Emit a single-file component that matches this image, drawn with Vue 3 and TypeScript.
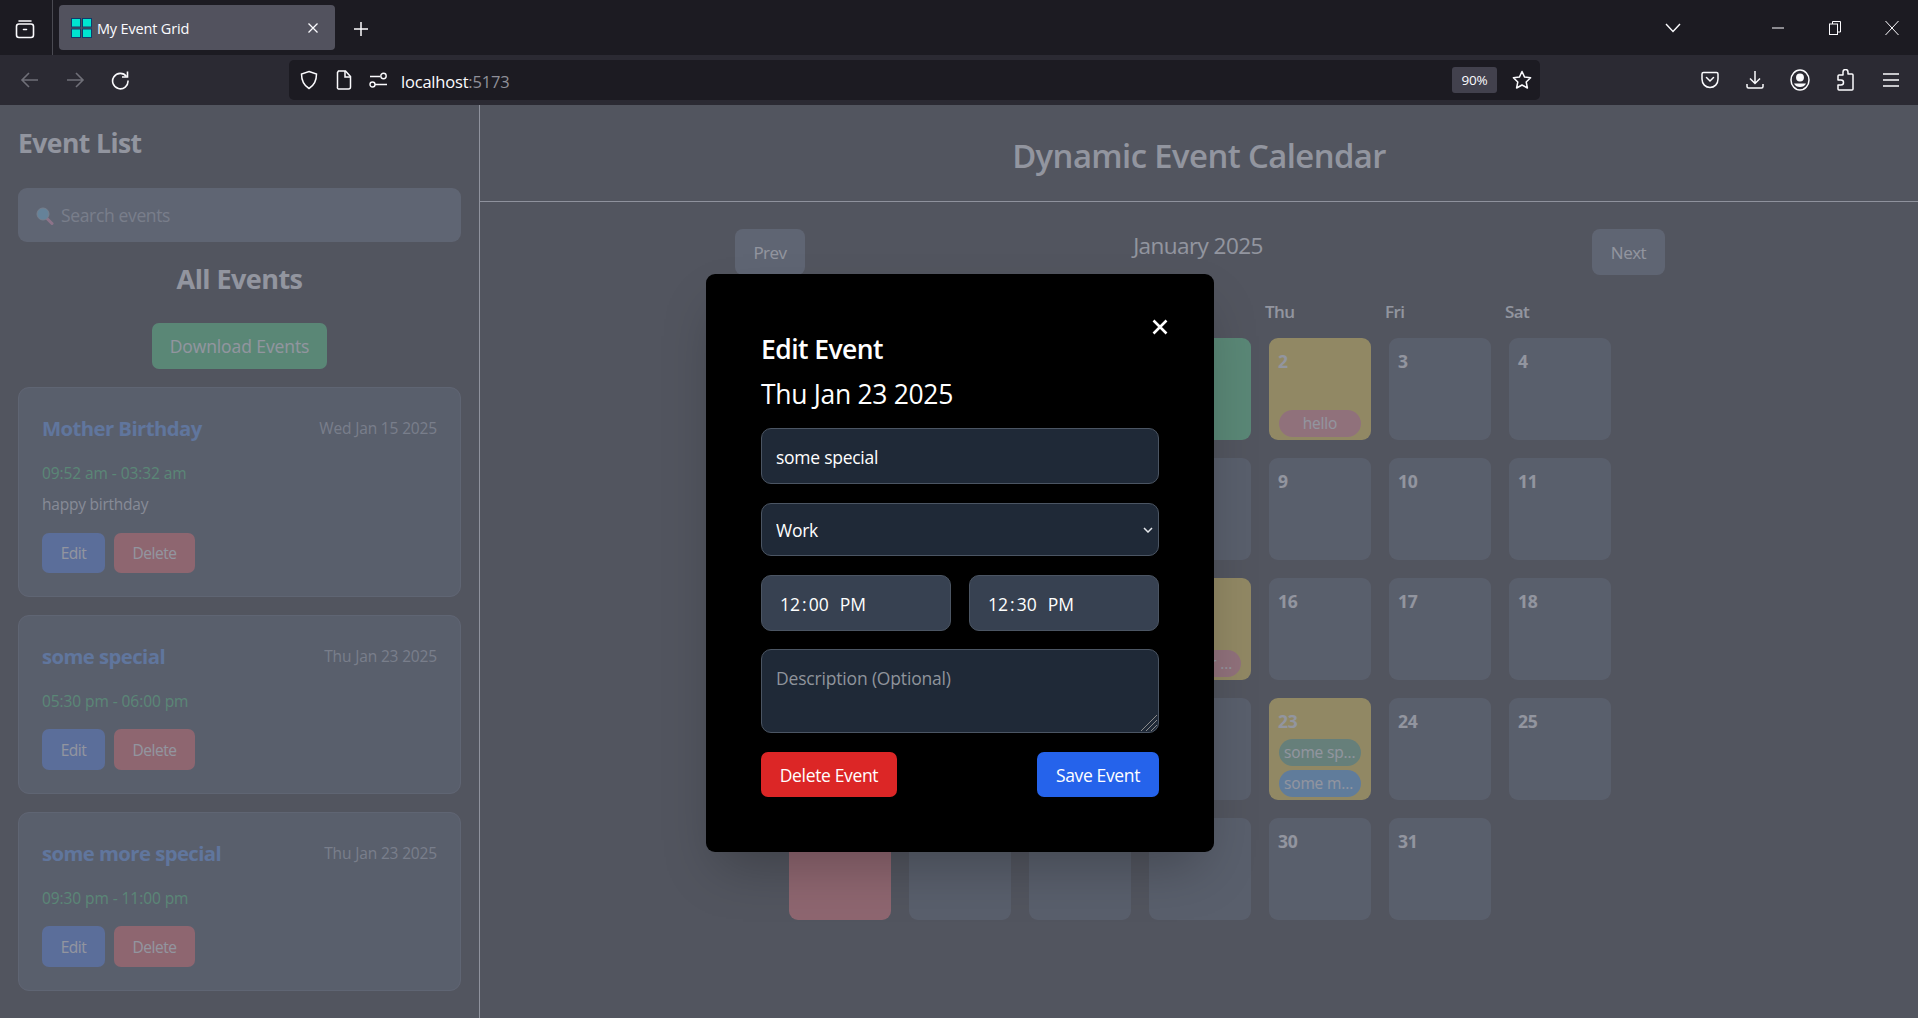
<script setup lang="ts">
type Pill = { label: string; tone: string };
type Day = { n: number; tone?: string; pills?: Pill[] };

const weekdays = ["Sun", "Mon", "Tue", "Wed", "Thu", "Fri", "Sat"];

const blanks = [1, 2, 3];

const tones: Record<number, string> = { 1: "green", 2: "yellow", 15: "yellow", 23: "yellow", 26: "red" };

const pillsByDay: Record<number, Pill[]> = {
  2: [{ label: "hello", tone: "red" }],
  15: [{ label: "Mother Birthday", tone: "red" }],
  23: [
    { label: "some special", tone: "green" },
    { label: "some more special", tone: "blue" }
  ]
};

const days: Day[] = Array.from({ length: 31 }, (_, i) => ({
  n: i + 1,
  tone: tones[i + 1],
  pills: pillsByDay[i + 1]
}));

const events = [
  { id: 1, title: "Mother Birthday", date: "Wed Jan 15 2025", time: "09:52 am - 03:32 am", desc: "happy birthday" },
  { id: 2, title: "some special", date: "Thu Jan 23 2025", time: "05:30 pm - 06:00 pm", desc: "" },
  { id: 3, title: "some more special", date: "Thu Jan 23 2025", time: "09:30 pm - 11:00 pm", desc: "" }
];
</script>

<template>
  <div class="window">
    <div class="tabstrip">
      <div class="tabstrip__view">
        <svg width="20" height="20" viewBox="0 0 20 20" fill="none" stroke="#fbfbfe" stroke-width="1.6">
          <rect x="1.5" y="5" width="17" height="13.5" rx="2.5" />
          <path d="M4 2h12M8.5 10.5h3" stroke-linecap="round" />
        </svg>
      </div>
      <div class="tab">
        <svg class="tab__icon" width="21" height="20" viewBox="0 0 21 20">
          <rect x="0.5" y="0.5" width="9" height="8.5" fill="#00e5d0" stroke="#123a6b" />
          <rect x="11.5" y="0.5" width="9" height="8.5" fill="#00e5d0" stroke="#123a6b" />
          <rect x="0.5" y="11" width="9" height="8.5" fill="#00e5d0" stroke="#123a6b" />
          <rect x="11.5" y="11" width="9" height="8.5" fill="#00e5d0" stroke="#123a6b" />
        </svg>
        <span class="tab__title">My Event Grid</span>
        <svg width="12" height="12" viewBox="0 0 12 12" stroke="#fbfbfe" stroke-width="1.3">
          <path d="M1.5 1.5l9 9M10.5 1.5l-9 9" />
        </svg>
      </div>
      <svg class="tabstrip__plus" width="16" height="16" viewBox="0 0 16 16" stroke="#fbfbfe" stroke-width="1.5">
        <path d="M8 1v14M1 8h14" />
      </svg>
      <div class="tabstrip__right">
        <svg class="tabstrip__list" width="16" height="10" viewBox="0 0 16 10" fill="none" stroke="#fbfbfe" stroke-width="1.4">
          <path d="M1 1l7 7.5L15 1" />
        </svg>
        <svg class="winbtn winbtn--min" width="12" height="2" viewBox="0 0 12 2" stroke="#fbfbfe"><path d="M0 1h12" /></svg>
        <svg class="winbtn winbtn--restore" width="12" height="16" viewBox="0 0 12 16" fill="none" stroke="#fbfbfe" stroke-width="1">
          <rect x="0.5" y="4" width="8" height="10.5" />
          <path d="M3.5 4V1.5h8v10.5H8.5" />
        </svg>
        <svg class="winbtn winbtn--close" width="14" height="16" viewBox="0 0 14 16" stroke="#fbfbfe" stroke-width="1">
          <path d="M0.5 1l13 14M13.5 1l-13 14" />
        </svg>
      </div>
    </div>

    <div class="toolbar">
      <div class="toolbar__nav">
        <svg width="20" height="20" viewBox="0 0 20 20" fill="none" stroke="#6f6f78" stroke-width="1.6">
          <path d="M18 10H2M9 3l-7 7 7 7" />
        </svg>
        <svg width="20" height="20" viewBox="0 0 20 20" fill="none" stroke="#6f6f78" stroke-width="1.6">
          <path d="M2 10h16M11 3l7 7-7 7" />
        </svg>
        <svg width="20" height="20" viewBox="0 0 20 20" fill="none" stroke="#fbfbfe" stroke-width="1.6">
          <path d="M16.5 6.5A7.7 7.7 0 1 0 18 10.5" />
          <path d="M17.5 1.5v5.5H12" />
        </svg>
      </div>
      <div class="urlbar">
        <svg width="20" height="20" viewBox="0 0 20 20" fill="none" stroke="#fbfbfe" stroke-width="1.5">
          <path d="M10 1.5l7.5 2.5c0 7.5-2.5 11.5-7.5 14.5C5 15.5 2.5 11.5 2.5 4z" />
        </svg>
        <svg class="urlbar__page" width="16" height="20" viewBox="0 0 16 20" fill="none" stroke="#fbfbfe" stroke-width="1.5">
          <path d="M2.5 1h7l5 5.5V17a2 2 0 0 1-2 2h-10a1.5 1.5 0 0 1-1-2V2.5z" />
          <path d="M9 1v6h6" />
        </svg>
        <svg class="urlbar__perm" width="19" height="16" viewBox="0 0 19 16" fill="none" stroke="#fbfbfe" stroke-width="1.4">
          <path d="M1 4.5h10M6 12.5h12" />
          <circle cx="14.5" cy="4" r="2.7" />
          <circle cx="3.5" cy="12.5" r="2.5" />
        </svg>
        <span class="urlbar__text">localhost<span class="urlbar__port">:5173</span></span>
        <span class="urlbar__zoom">90%</span>
        <svg class="urlbar__star" width="20" height="20" viewBox="0 0 20 20" fill="none" stroke="#fbfbfe" stroke-width="1.5" stroke-linejoin="round">
          <path d="M10 1.5l2.6 5.6 6 .7-4.4 4.2 1.2 6L10 15l-5.4 3 1.2-6L1.4 7.8l6-.7z" />
        </svg>
      </div>
      <div class="toolbar__right">
        <svg width="20" height="20" viewBox="0 0 20 20" fill="none" stroke="#fbfbfe" stroke-width="1.5">
          <path d="M3.5 2.5h13A1.5 1.5 0 0 1 18 4v5c0 5-3.5 8.5-8 8.5S2 14 2 9V4a1.5 1.5 0 0 1 1.5-1.5z" />
          <path d="M6.500 7.500L10 11l3.500-3.500" stroke-linecap="round" />
        </svg>
        <svg width="20" height="20" viewBox="0 0 20 20" fill="none" stroke="#fbfbfe" stroke-width="1.5">
          <path d="M10 1v12M5 8.500l5 5 5-5M2 14v2.500A1.500 1.500 0 0 0 3.500 18h13a1.500 1.500 0 0 0 1.500-1.500V14" />
        </svg>
        <svg width="20" height="22" viewBox="0 0 20 22" fill="none" stroke="#fbfbfe" stroke-width="1.5">
          <ellipse cx="10" cy="11" rx="9" ry="10" />
          <circle cx="10" cy="8.5" r="3.2" fill="#fbfbfe" />
          <path d="M4 14.500h12c-1 2.500-3.500 3.500-6 3.500s-5-1-6-3.500z" fill="#fbfbfe" stroke="none" />
        </svg>
        <svg class="toolbar__ext" width="18" height="22" viewBox="0 0 18 22" fill="none" stroke="#fbfbfe" stroke-width="1.5" stroke-linejoin="round">
          <path d="M7 4V3a2.500 2.500 0 0 1 5 0v2h4a1 1 0 0 1 1 1v14a1 1 0 0 1-1 1H3a1 1 0 0 1-1-1v-4h3a2.500 2.500 0 0 0 0-5H2V7a1 1 0 0 1 1-1h4z" />
        </svg>
        <svg class="toolbar__menu" width="16" height="16" viewBox="0 0 16 16" stroke="#fbfbfe" stroke-width="1.5">
          <path d="M0 2h16M0 8h16M0 14h16" />
        </svg>
      </div>
    </div>

    <div class="page">
      <aside class="sidebar">
        <h2 class="sidebar__title">Event List</h2>
        <div class="search">
          <input class="search__input" type="text" placeholder="Search events" />
          <svg class="search__icon" width="18" height="18" viewBox="0 0 18 18">
            <path d="M10.500 11l5.500 5.500" stroke="#e879a8" stroke-width="3" stroke-linecap="round" />
            <circle cx="7" cy="7" r="6" fill="#4db3e6" stroke="#8ea6b8" stroke-width="1" />
          </svg>
        </div>
        <h3 class="sidebar__sub">All Events</h3>
        <button class="download">Download Events</button>
        <div v-for="ev in events" :key="ev.id" class="card">
          <div class="card__head">
            <span class="card__title">{{ ev.title }}</span>
            <span class="card__date">{{ ev.date }}</span>
          </div>
          <div class="card__time">{{ ev.time }}</div>
          <div v-if="ev.desc" class="card__desc">{{ ev.desc }}</div>
          <div class="card__actions">
            <button class="btn btn--edit">Edit</button>
            <button class="btn btn--delete">Delete</button>
          </div>
        </div>
      </aside>

      <main class="main">
        <header class="main__header">
          <h1 class="main__title">Dynamic Event Calendar</h1>
        </header>
        <div class="calendar">
          <div class="calendar__nav">
            <button class="nav-btn nav-btn--prev">Prev</button>
            <h2 class="calendar__month">January 2025</h2>
            <button class="nav-btn nav-btn--next">Next</button>
          </div>
          <div class="weekdays">
            <div v-for="d in weekdays" :key="d">{{ d }}</div>
          </div>
          <div class="grid">
            <div v-for="b in blanks" :key="b" class="cell cell--blank"></div>
            <div
              v-for="d in days"
              :key="d.n"
              class="cell"
              :class="d.tone ? 'cell--' + d.tone : ''"
            >
              <span class="cell__num">{{ d.n }}</span>
              <div v-if="d.pills" class="cell__pills">
                <div v-for="p in d.pills" :key="p.label" class="pill" :class="'pill--' + p.tone">{{ p.label }}</div>
              </div>
            </div>
          </div>
        </div>
      </main>

      <div class="overlay">
        <div class="modal">
          <svg class="modal__close" width="16" height="16" viewBox="0 0 16 16" stroke="#fff" stroke-width="2.6">
            <path d="M1.500 1.500l13 13M14.500 1.500l-13 13" />
          </svg>
          <h2 class="modal__title">Edit Event</h2>
          <p class="modal__date">Thu Jan 23 2025</p>
          <input class="field field--text" type="text" value="some special" />
          <div class="select">
            <select class="field field--select">
              <option>Work</option>
              <option>Personal</option>
              <option>Other</option>
            </select>
            <svg class="select__arrow" width="10" height="6" viewBox="0 0 10 6" fill="none" stroke="#e5e7eb" stroke-width="1.5">
              <path d="M1 1l4 4 4-4" />
            </svg>
          </div>
          <div class="times">
            <div class="time"><span>12</span><i>:</i><span>00</span><b>PM</b></div>
            <div class="time"><span>12</span><i>:</i><span>30</span><b>PM</b></div>
          </div>
          <div class="area">
            <textarea class="field field--area" placeholder="Description (Optional)"></textarea>
            <svg class="area__grip" width="18" height="18" viewBox="0 0 18 18" stroke="#8a8a8a" stroke-width="1">
              <path d="M17 1L1 17M17 6L6 17M17 11L11 17" />
            </svg>
          </div>
          <div class="modal__actions">
            <button class="action action--delete">Delete Event</button>
            <button class="action action--save">Save Event</button>
          </div>
        </div>
      </div>
    </div>
  </div>
</template>

<style scoped>
.window {
  width: 1918px;
  height: 1018px;
  display: flex;
  flex-direction: column;
  overflow: hidden;
  font-family: "Open Sans", "Noto Sans", sans-serif;
  letter-spacing: -0.035em;
  color: #fff;
}

/* browser chrome */
.tabstrip {
  height: 55px;
  background: #1c1b22;
  display: flex;
  align-items: center;
  flex-shrink: 0;
}

.tabstrip__view {
  width: 53px;
  height: 55px;
  border-right: 1px solid #4a4a52;
  box-sizing: border-box;
  padding: 19px 0 0 15px;
  margin-right: 5px;
}

.tab {
  width: 276px;
  height: 45px;
  margin-left: 1px;
  background: #52525e;
  border-radius: 4px;
  display: flex;
  align-items: center;
  padding: 0 16px 0 12px;
  box-sizing: border-box;
}

.tab__icon {
  margin-top: 1px;
}

.tab__title {
  flex: 1;
  margin: 2px 0 0 5px;
  font-size: 14.5px;
  letter-spacing: -0.012em;
  color: #fbfbfe;
}

.tabstrip__plus {
  margin: 3px 0 0 18px;
}

.tabstrip__right {
  margin-left: auto;
  display: flex;
  align-items: center;
}

.tabstrip__list {
  margin-right: 91px;
}

.winbtn--min {
  margin-right: 45px;
}

.winbtn--restore {
  margin-right: 44px;
}

.winbtn--close {
  margin-right: 19px;
}

.toolbar {
  height: 50px;
  background: #2b2a33;
  display: flex;
  align-items: center;
  flex-shrink: 0;
}

.toolbar__nav {
  width: 289px;
  display: flex;
  gap: 25px;
  padding-left: 20px;
  box-sizing: border-box;
}

.urlbar {
  width: 1251px;
  height: 40px;
  background: #1c1b22;
  border-radius: 5px;
  display: flex;
  align-items: center;
  padding: 0 8px 0 10px;
  box-sizing: border-box;
}

.urlbar__page {
  margin-left: 17px;
}

.urlbar__perm {
  margin-left: 17px;
}

.urlbar__text {
  margin: 2px 0 0 13px;
  font-size: 16.5px;
  letter-spacing: -0.012em;
  color: #fbfbfe;
}

.urlbar__port {
  color: #8f8f98;
}

.urlbar__zoom {
  margin-left: auto;
  width: 45px;
  height: 26px;
  line-height: 26px;
  text-align: center;
  background: #42414d;
  border-radius: 3px;
  font-size: 13.5px;
  letter-spacing: -0.01em;
  color: #fbfbfe;
}

.urlbar__star {
  margin-left: 15px;
}

.toolbar__right {
  flex: 1;
  display: flex;
  align-items: center;
  padding-left: 160px;
  gap: 25px;
}

.toolbar__ext {
  margin-left: 1px;
}

.toolbar__menu {
  margin-left: 4px;
}

/* page behind the modal */
.page {
  position: relative;
  flex: 1;
  display: flex;
  background: #000;
  overflow: hidden;
}

.sidebar {
  width: 480px;
  flex-shrink: 0;
  box-sizing: border-box;
  border-right: 1px solid #f3f4f6;
  padding: 19px 18px 0;
}

.sidebar__title {
  margin: 0 0 26px;
  font-size: 26.5px;
  line-height: 38px;
  font-weight: 700;
}

.search {
  position: relative;
}

.search__input {
  display: block;
  width: 100%;
  height: 54px;
  box-sizing: border-box;
  padding: 0 16px 0 43px;
  background: #374151;
  border: 0;
  border-radius: 9px;
  font-family: inherit;
  font-size: 17.5px;
  letter-spacing: -0.02em;
  color: #fff;
}

.search__input::placeholder {
  color: #9ca3af;
}

.search__icon {
  position: absolute;
  left: 18px;
  top: 19px;
}

.sidebar__sub {
  margin: 18px 0 25px;
  height: 38px;
  line-height: 38px;
  text-align: center;
  font-size: 27px;
  font-weight: 700;
}

.download {
  display: block;
  margin: 0 auto 18px;
  width: 175px;
  height: 46px;
  background: #22c55e;
  border: 0;
  border-radius: 7px;
  color: #fff;
  font-family: inherit;
  font-size: 17.5px;
  letter-spacing: -0.005em;
}

.card {
  box-sizing: border-box;
  background: #1f2937;
  border: 1px solid #374151;
  border-radius: 11px;
  padding: 23px;
  margin-bottom: 18px;
}

.card__head {
  display: flex;
  justify-content: space-between;
  align-items: center;
  height: 34px;
}

.card__title {
  font-size: 20.3px;
  font-weight: 700;
  color: #3b82f6;
}

.card__date {
  font-size: 15.5px;
  letter-spacing: -0.01em;
  color: #9ca3af;
}

.card__time {
  margin-top: 18px;
  height: 20px;
  line-height: 20px;
  font-size: 15.5px;
  letter-spacing: -0.005em;
  color: #22c55e;
}

.card__desc {
  margin-top: 11px;
  height: 20px;
  line-height: 20px;
  font-size: 15.5px;
  letter-spacing: -0.015em;
  color: #d1d5db;
}

.card__actions {
  display: flex;
  gap: 9px;
  margin-top: 18px;
}

.card__desc + .card__actions {
  margin-top: 19px;
}

.card__desc + .card__actions .btn {
  height: 40px;
}

.btn {
  height: 41px;
  border: 0;
  border-radius: 7px;
  color: #fff;
  font-family: inherit;
  font-size: 15.5px;
  letter-spacing: -0.03em;
}

.btn--edit {
  width: 63px;
  background: #2563eb;
}

.btn--delete {
  width: 81px;
  background: #ef4444;
}

.main {
  flex: 1;
  min-width: 0;
}

.main__header {
  height: 97px;
  box-sizing: border-box;
  border-bottom: 1px solid #f3f4f6;
  padding-top: 4px;
  display: flex;
  align-items: center;
  justify-content: center;
}

.main__title {
  margin: 0;
  font-size: 32.8px;
  font-weight: 600;
}

.calendar {
  width: 930px;
  margin-left: 255px;
  padding-top: 27px;
}

.calendar__nav {
  display: flex;
  justify-content: space-between;
  align-items: flex-start;
}

.calendar__month {
  margin: 0 0 0 -1px;
  font-size: 22.5px;
  line-height: 33px;
  font-weight: 400;
}

.nav-btn {
  height: 46px;
  padding: 0;
  background: #374151;
  border: 0;
  border-radius: 8px;
  color: #fff;
  font-family: inherit;
  font-size: 17px;
  letter-spacing: -0.03em;
}

.nav-btn--prev {
  width: 70px;
}

.nav-btn--next {
  width: 73px;
}

.weekdays {
  display: grid;
  grid-template-columns: repeat(7, 120px);
  margin: 25px 0 14px 50px;
  height: 24px;
  line-height: 24px;
  font-size: 17px;
  font-weight: 600;
}

.grid {
  display: grid;
  grid-template-columns: repeat(7, 102px);
  grid-auto-rows: 102px;
  gap: 18px;
  margin-left: 54px;
}

.cell {
  position: relative;
  background: #1f2937;
  border-radius: 9px;
  display: flex;
  flex-direction: column;
  box-sizing: border-box;
  padding: 11px 10px 3px;
}

.cell--green {
  background: #22c55e;
}

.cell--yellow {
  background: #facc15;
}

.cell--red {
  background: #ef4444;
}

.cell__num {
  font-size: 17.5px;
  line-height: 24px;
  font-weight: 700;
  letter-spacing: -0.02em;
  margin-left: -1px;
}

.cell__pills {
  margin-top: auto;
  display: flex;
  flex-direction: column;
  gap: 4px;
}

.pill {
  height: 27px;
  line-height: 27px;
  border-radius: 14px;
  padding: 0 5px;
  text-align: center;
  font-size: 15.5px;
  letter-spacing: -0.01em;
  overflow: hidden;
  white-space: nowrap;
  text-overflow: ellipsis;
}

.pill--red {
  background: #f87171;
}

.pill--green {
  background: #4fa76e;
}

.pill--blue {
  background: #3b9bf0;
}

/* modal */
.overlay {
  position: absolute;
  inset: 0;
  background: rgba(109, 113, 127, 0.75);
  display: flex;
  align-items: center;
  justify-content: center;
}

.modal {
  position: relative;
  width: 508px;
  height: 578px;
  margin: 3px 0 0 2px;
  box-sizing: border-box;
  padding: 55px;
  background: #000;
  border-radius: 9px;
  box-shadow: 0 25px 50px -12px rgba(0, 0, 0, 0.25);
}

.modal__close {
  position: absolute;
  top: 45px;
  right: 46px;
}

.modal__title {
  margin: 0;
  height: 40px;
  line-height: 40px;
  font-size: 26.5px;
  font-weight: 600;
}

.modal__date {
  margin: 5px 0 14px;
  height: 40px;
  line-height: 40px;
  font-size: 26.5px;
  letter-spacing: -0.012em;
}

.field {
  display: block;
  width: 100%;
  height: 56px;
  box-sizing: border-box;
  padding: 0 14px;
  background: #1f2937;
  border: 1px solid #4b5563;
  border-radius: 10px;
  color: #fff;
  font-family: inherit;
  font-size: 17.5px;
  letter-spacing: -0.015em;
  margin-bottom: 19px;
}

.field--text {
  padding-top: 2px;
}

.select {
  position: relative;
}

.select__arrow {
  position: absolute;
  right: 6px;
  top: 24px;
}

.field--select {
  height: 53px;
  appearance: none;
}

.field--area {
  height: 84px;
  padding: 16px 14px;
  margin-bottom: 19px;
  resize: none;
  letter-spacing: -0.01em;
}

.field--area::placeholder {
  color: #8f949c;
}

.area {
  position: relative;
}

.area__grip {
  position: absolute;
  right: 1px;
  top: 65px;
}

.times {
  display: flex;
  gap: 18px;
  margin-bottom: 18px;
}

.time {
  flex: 1;
  height: 56px;
  box-sizing: border-box;
  display: flex;
  align-items: center;
  padding: 2px 0 0 18px;
  background: #374151;
  border: 1px solid #4b5563;
  border-radius: 10px;
  font-size: 17.5px;
  letter-spacing: 0;
}

.time i {
  font-style: normal;
  margin: 0 2px;
}

.time b {
  font-weight: 400;
  margin-left: 11px;
}

.modal__actions {
  display: flex;
  justify-content: space-between;
}

.action {
  height: 45px;
  border: 0;
  border-radius: 7px;
  color: #fff;
  font-family: inherit;
  font-size: 17.5px;
  letter-spacing: -0.02em;
}

.action--delete {
  width: 136px;
  background: #dc2626;
}

.action--save {
  width: 122px;
  background: #2563eb;
}
</style>

<style>
html,
body {
  margin: 0;
  overflow: hidden;
}
</style>
